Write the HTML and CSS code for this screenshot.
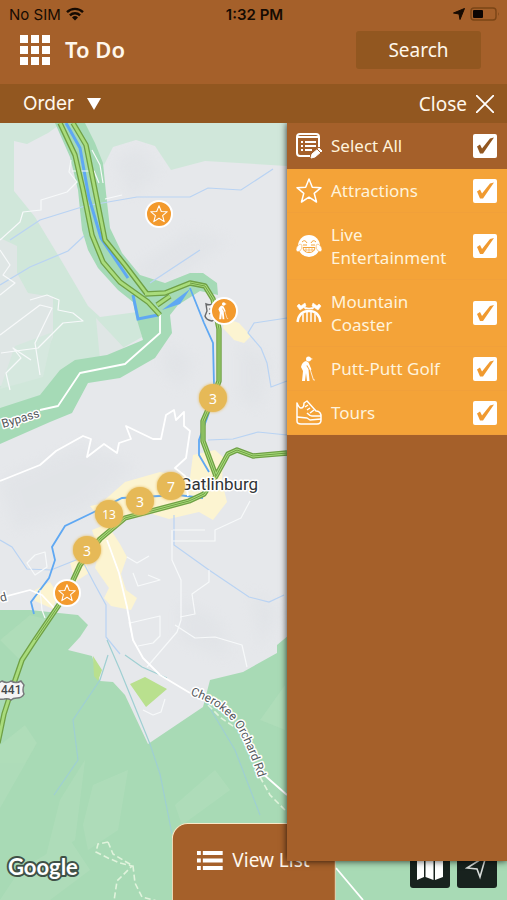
FILE: index.html
```html
<!DOCTYPE html>
<html lang="en">
<head>
    <meta charset="UTF-8">
    <meta name="viewport" content="width=device-width, initial-scale=1.0">
    <title>To Do</title>
    <link rel="stylesheet" href="styles.css">
</head>
<body>
    <div class="status-bar">
        <div class="carrier">
            <span>No SIM</span>
            <svg width="18" height="14" viewBox="0 0 18 14" fill="none" stroke="#160b02" stroke-width="2.4">
                <path d="M1 5.2a11.4 11.4 0 0 1 16 0M3.9 8.3a7.3 7.3 0 0 1 10.2 0"/>
                <path d="M9 13.6l-3-3.1a4.3 4.3 0 0 1 6 0z" fill="#160b02" stroke="none"/>
            </svg>
        </div>
        <strong class="clock">1:32 PM</strong>
        <div class="indicators">
            <svg width="12" height="12" viewBox="0 0 12 12"><path d="M11.5.5L7 11.5 6 6 .5 5z" fill="#160b02" stroke="#160b02" stroke-linejoin="round"/></svg>
            <svg width="30" height="14" viewBox="0 0 30 14">
                <rect x="1" y="1" width="25" height="12" rx="3" fill="none" stroke="#7b4516" stroke-width="1.4"/>
                <rect x="3" y="3" width="10" height="8" rx="1" fill="#0b0502"/>
                <path d="M28 5v4q1.5-2 0-4z" fill="#7b4516"/>
            </svg>
        </div>
    </div>

    <header class="header">
        <button class="menu-button" aria-label="Menu">
            <svg width="30" height="30" viewBox="0 0 30 30" fill="#fff">
                <path d="M0 0h8v8H0zM11 0h8v8h-8zM22 0h8v8h-8zM0 11h8v8H0zM11 11h8v8h-8zM22 11h8v8h-8zM0 22h8v8H0zM11 22h8v8h-8zM22 22h8v8h-8z"/>
            </svg>
        </button>
        <h1>To Do</h1>
        <button class="search-button">Search</button>
    </header>

    <div class="toolbar">
        <div class="order">
            <select class="order-select" aria-label="Order">
                <option>Order</option>
            </select>
            <svg width="14" height="12" viewBox="0 0 14 12"><path d="M0 0h14L7 12z" fill="#fff"/></svg>
        </div>
        <button class="close-button">
            Close
            <svg width="18" height="18" viewBox="0 0 18 18"><path d="M0 0l18 18M18 0L0 18" stroke="#fff" stroke-width="1.8"/></svg>
        </button>
    </div>

    <main class="map">
        <svg class="map-canvas" viewBox="0 123 507 777" preserveAspectRatio="xMidYMid slice">
            <defs>
                <path id="orchard" d="M190 695Q226 706 240 733T262 790"/>
                <filter id="soft"><feGaussianBlur stdDeviation="7"/></filter>
            </defs>
            <rect y="123" width="507" height="777" fill="#e6e8eb"/>

            <!-- hill shading -->
            <g fill="#dcdfe3" opacity=".4" filter="url(#soft)">
                <path d="M115 160l25-12 20 25-30 25zM130 270l60-40 40 10-70 50zM165 340l30 20-15 30-18-20zM240 340l30 20-10 50-20-10zM0 480l80-35 55 20-50 45-70 20zM180 600l40 20 10 40-50-20zM250 590l30 20-20 40z"/>
            </g>

            <!-- woods -->
            <g fill="#d0e7da">
                <path d="M0 123h62L48 133 27 144l-13-3v50l21 26 26 43 27 46 12 11 37-5 5 25-35 20-47 15-20 25L0 410z"/>
                <path d="M78 123h209v43l-82-5-34 9-16-24-19-6-23 7-9 18-12-18z"/>
            </g>
            <path d="M0 238l17 8v27l11 20 25 4v40l-18 38-25 8-10 3zM96 318l30 32-25 20z" fill="#dfe6e5"/>
            <path d="M15 346l38-14-10 45-43 12z" fill="#d6e8df"/>
            <path d="M55 123l15 34 8 33 4 40 6 20 10 18 20 22 15 12 4 18 6 20-36 15-32 5-15 10-20 25L0 408v36l50-22 22-9 16-30 32-5 35-20 17-25-2-18 8-10 22-14 18 4-1-12-14-10-13 0-25 10-25-8-18-22-12-25-4-35-3-30-8-20-15-30z" fill="#a5dab6"/>
            <path d="M0 610h30l48 5 10 10-8 12-12 13 24 6 8 25 13 1 12 13 23 49 55-37 7-27 33-8 34-19v-8l30-25 200-20v300H0z" fill="#a8dab5"/>
            <g fill="#b5dfbe" opacity=".5">
                <path d="M0 745l25-20 12 18-37 65zM60 800l25-40-10 80-30 20zM83 825l10-40 35-15-10 60-30 20zM175 805l40-35 15 20-48 35zM260 720l25-35v45zM0 640l30-25 20 5-30 40z"/>
                <path d="M20 870l50-30 20 30-40 30H0z"/>
            </g>
            <path d="M130 684l15-7 22 12-21 18zM93 656l9 14-4 11-4-5z" fill="#b9e08e"/>

            <!-- built-up areas -->
            <g fill="#fcf4d1">
                <path d="M225 318l14 5 12 13-7 7-10-3-11-12zM193 455l22-5 8 7-1 25 5 20-14 18-14-8-30 7-20-6-30 3-15 8-14-18 10-2 25-22 35-10 30 6z"/>
                <path d="M92 530l15-6 13 20 7 13-6 17 5 16 11 8-6 12-20-4-7-8 5-10-14-20 4-16zM35 590l15-8 8 12-5 15-18-8zM70 562l15-3 4 14-14 9z"/>
            </g>

            <!-- creeks -->
            <g fill="none" stroke="#b9d3f3" stroke-width="1.2">
                <path d="M0 285l30-18 38-16 16-15M10 240l30-20 45-14 52-9h53l18-9 33 2 32-21M150 283l50-33M287 318l-33 5-6 10 13 15 6 15 4 24 16-6M208 440l25-1 25-7 29 3M174 515v30l35 25 40 27 20 5 15-7M0 540l12 7 15 22 24 1 30-12 13 25 12 22v32l14 17"/>
            </g>
            <g fill="none" stroke="#9fcfd2" stroke-width="1.2">
                <path d="M108 655l-8 25-27 40 5 40-24 35M107 640l13 30 30 74 10 30 12 60M125 655l17 12 25 11M205 700l30 50 25 65"/>
            </g>
            <g fill="none" stroke="#5fa8f3" stroke-width="1.8">
                <path d="M190 288l14 35 9 20 1 42-4 25-11 30v15l10 17M203 498l-25-3-56 3-30 15-27 13-13 21 3 13-6 18-18 24 3 12"/>
                <path d="M133 295l5 24 20-4M66 123l14 25 9 50 12 40 27 40" stroke-width="3"/>
            </g>
            <path d="M162 310l28-21-10 15z" fill="#5fa8f3"/>

            <!-- side streets -->
            <g fill="none" stroke="#f7f9fa" stroke-width="1.2" stroke-linejoin="round">
                <path d="M0 240l20-18 3-10 18-2v-10l26-8 10-10-8-10 2-12M92 150l8 15 3 18M72 171h22l5 12M105 199l17-4"/>
                <path d="M0 250l10 15-7 10 12 8-15 12M30 300l17-5 12 5-1 10 15 3 10 8-20 2-25 25-37 5M0 335l40-30 12 3-17 35 5 32M10 390l-4-17 15-15-8-10 18 12"/>
                <path d="M172 530v30l9 20v40l-4 12-30 35M173 530h32M173 541h42v-11l26-12 9-17M180 617l15-3-3-20 17-12v-12M175 625l20 13 20-1 27 8 5 22M127 557l10 6 12-7M133 573l5 13 22-6-12-5M130 623l30-7v20l-7 7-15 3M133 640l-4-18M27 563l8-8 10-3 2 15-12 8zM40 590l2 20 3 8M143 710l10 5 8-3 4-13"/>
            </g>
            <g fill="none" stroke="#fff" stroke-width="1.8" stroke-linejoin="round">
                <path d="M0 481l5-2 35-14 16-14 27-15 8 3-4 18 17-13 13 9 2-10 12-4-5-13 27 13h8l5-24 8-5 2 10 8-8v14l6 5-4 27-11 10 10 8 3 20"/>
                <path d="M160 314v19l-35 31-45 9-22 33-18 4M0 598l30-8 12 5 13 14M107 540l12 33 8 34 6 33 10 18 17 17 30 18M262 773l25 22M336 868l27 32"/>
            </g>

            <!-- highways -->
            <g fill="none" stroke-linejoin="round">
                <g stroke="#6fa045" stroke-width="5.4">
                    <path d="M60 123l15 32 8 35 9 45 11 27 17 20 28 20 12 13M73 123l13 22 9 45 10 50 20 25 22 29M157 305l13-9"/>
                    <path d="M145 294l20-1 25-10 15 3 8 13 6 30v52l-6 17-10 23v20l13 35M287 453l-34 3-16-6-9 4-12 22-12 18-15 7-64 17-25 21-20 26-13 28-32 47-13 20-10 29-8 25-6 29"/>
                </g>
                <g stroke="#a9dc7c" stroke-width="2.8">
                    <path d="M60 123l15 32 8 35 9 45 11 27 17 20 28 20 12 13M73 123l13 22 9 45 10 50 20 25 22 29M157 305l13-9"/>
                    <path d="M145 294l20-1 25-10 15 3 8 13 6 30v52l-6 17-10 23v20l13 35M287 453l-34 3-16-6-9 4-12 22-12 18-15 7-64 17-25 21-20 26-13 28-32 47-13 20-10 29-8 25-6 29"/>
                </g>
                <path d="M190 283l15 3 8 13 6 30v52l-6 17-10 23v20l13 35M287 453l-34 3-16-6-9 4-12 22-12 18-15 7-64 17-25 21-20 26-13 28-32 47" stroke="#6fa045" stroke-width="1"/>
            </g>

            <!-- trails -->
            <path d="M208 705l13 13 15 10M260 777l10 18 15 15M108 842l-10 2-2 8 12 6 12 5 12 3-15 15-3 20M108 842l5 12 20 12 2 17 7 14 15 4" fill="none" stroke="#e0f3dc" stroke-width="1.6" stroke-dasharray="6 3"/>

            <g class="map-label">
                <text x="3" y="428" transform="rotate(-17 3 428)" font-size="12">Bypass</text>
                <text x="1" y="602" transform="rotate(-15 1 602)" font-size="12">d</text>
                <text font-size="12"><textPath href="#orchard">Cherokee Orchard Rd</textPath></text>
                <text class="town" x="180" y="490">Gatlinburg</text>
            </g>
            <path d="M-8 682q6 2 10-1 5 3 9 0 5 3 10 0l3 4q-2 5 0 9-2 4-7 4-4 0-6 2-3-2-7-1-6 1-12-1z" fill="#f4f4f4" stroke="#77797b" stroke-width="1.5"/>
            <text class="shield" x="1" y="694">441</text>
            <path d="M206 304q4 2 8-1l5 2v15q-5-1-7 1-6-1-7-5l2-5z" fill="#eee" stroke="#66686a" stroke-width="1.4"/>
            <path d="M209 309h4M209 314q3-2 4 0v3" fill="none" stroke="#66686a" stroke-width="1.2"/>
            <text class="google" x="8" y="875">Google</text>
        </svg>

        <button class="pin pin-attraction-north" aria-label="Attraction">
            <svg width="18" height="18" viewBox="0 0 26 26"><use href="#icon-star"/></svg>
        </button>
        <button class="pin pin-golf" aria-label="Putt-Putt Golf">
            <svg width="18" height="18" viewBox="0 0 26 26"><use href="#icon-golf"/></svg>
        </button>
        <button class="pin pin-attraction-south" aria-label="Attraction">
            <svg width="18" height="18" viewBox="0 0 26 26"><use href="#icon-star"/></svg>
        </button>
        <button class="cluster cluster-north">3</button>
        <button class="cluster cluster-town">7</button>
        <button class="cluster cluster-center">3</button>
        <button class="cluster cluster-west small">13</button>
        <button class="cluster cluster-south">3</button>

        <button class="view-list">
            <svg width="26" height="19" viewBox="0 0 26 19" fill="#fff">
                <path d="M0 0h4v4H0zM6 0h20v4H6zM0 7.5h4v4H0zM6 7.5h20v4H6zM0 15h4v4H0zM6 15h20v4H6z"/>
            </svg>
            View List
        </button>
        <div class="map-buttons">
            <button class="map-button" aria-label="Map type">
                <svg width="26" height="26" viewBox="0 0 26 26" fill="#fff"><path d="M0 3l7-2v21l-7 3zM8.5 1l8 2v22l-8-3zM18 3l8-2v21l-8 3z"/></svg>
            </button>
            <button class="map-button" aria-label="My location">
                <svg width="24" height="26" viewBox="0 0 24 26" fill="none" stroke="#d8dcda" stroke-width="1.6"><path d="M21 1L15 22l-3-8-10-1z"/></svg>
            </button>
        </div>

        <aside class="filters">
            <label class="filter filter-all">
                <svg class="filter-icon" viewBox="0 0 26 26" fill="none" stroke="#fff" stroke-width="2">
                    <path d="M14 23H4q-3 0-3-3V4q0-3 3-3h16q3 0 3 3v10M1 4h22"/>
                    <path d="M5 9h2M9 9h11M5 13h2M9 13h11M5 17h2M9 17h7"/>
                    <path d="M15 25l1-4 7-6 3 3-7 6z" fill="#fff" stroke="#fff" stroke-width="1"/>
                    <path d="M21 16l4 4" stroke="#a5602a" stroke-width="1"/>
                </svg>
                <span>Select All</span>
                <input type="checkbox" checked>
            </label>
            <label class="filter">
                <svg class="filter-icon" viewBox="0 0 26 26">
                    <path id="icon-star" d="M13 1l3.3 8.3 8.7.4-6.8 5.6 2.3 8.7-7.5-4.8L5.500 24l2.300-8.700L1 9.700l8.700-.4z" fill="none" stroke="#fff" stroke-width="1.5" stroke-linejoin="round"/>
                </svg>
                <span>Attractions</span>
                <input type="checkbox" checked>
            </label>
            <label class="filter">
                <svg class="filter-icon" viewBox="0 0 26 26">
                    <circle cx="13" cy="13" r="11" fill="#fff"/>
                    <path d="M4 11q-4 2-4 6 1 3 4 1 2-2 2-6zM22 11q4 2 4 6-1 3-4 1-2-2-2-6z" fill="#fff" stroke="#f4a338" stroke-width=".5"/>
                    <path d="M6 9q3-3 5 1M15 10q2-4 5-1M7 12h4M15 12h4" fill="none" stroke="#f4a338"/>
                    <path d="M7 14.500h12q-.5 5-6 5t-6-5z" fill="#fff" stroke="#f4a338"/>
                    <path d="M7.5 17h11M10 15v3M13 15v4M16 15v3" stroke="#f4a338" stroke-width=".6"/>
                </svg>
                <span>Live Entertainment</span>
                <input type="checkbox" checked>
            </label>
            <label class="filter">
                <svg class="filter-icon" viewBox="0 0 26 26" fill="none" stroke="#fff">
                    <path d="M1.500 22Q3 11 13 11t11.500 11" stroke-width="2.400"/>
                    <path d="M7 14v8M11 12v10M15 12v10M19 14v8" stroke-width="1.500"/>
                    <path d="M1 6l2-2 2 2 4-3 1 3-6 4zM16 6l1-3 4 3 2-2 2 2-3 4zM8 7l4 1h2l4-1-1 2H9z" fill="#fff" stroke-width=".6"/>
                </svg>
                <span>Mountain Coaster</span>
                <input type="checkbox" checked>
            </label>
            <label class="filter">
                <svg class="filter-icon" viewBox="0 0 26 26">
                    <g id="icon-golf">
                        <circle cx="12.500" cy="3" r="2.500" fill="#fff"/>
                        <path d="M12 1l5 2-3 1zM10 5q-4 1-5 6l2 4-1 10h3l1-8 1 8h2.500l-1-12-2-3 .5-1 3 5 1.500-.5-3-7z" fill="#fff"/>
                        <path d="M14 13l3.500 11h1.500" fill="none" stroke="#fff" stroke-width=".8"/>
                    </g>
                </svg>
                <span>Putt-Putt Golf</span>
                <input type="checkbox" checked>
            </label>
            <label class="filter">
                <svg class="filter-icon" viewBox="0 0 26 26" fill="none" stroke="#fff" stroke-width="1.5" stroke-linejoin="round">
                    <path d="M1 3v18q0 3 4 3h16q4 0 4-4v-5q-1-4-5-4L11 1 8 3q0 5-3 5-2 0-4-5z"/>
                    <path d="M1 17l10 1 3 2 11-1M11 13q3 3 5 3h9M9 7l3-2M11 10l3-2M14 13l4-3"/>
                </svg>
                <span>Tours</span>
                <input type="checkbox" checked>
            </label>
        </aside>
    </main>
</body>
</html>
```

FILE: styles.css
```css
* {
    box-sizing: border-box;
}
body {
    margin: 0;
    height: 100vh;
    display: flex;
    flex-direction: column;
    overflow: hidden;
    font-family: "Noto Sans", sans-serif;
    background: #a5602a;
    color: #fff7ec;
}
button {
    border: none;
    padding: 0;
    background: none;
    color: inherit;
    font: inherit;
    cursor: pointer;
}

/* phone status bar */
.status-bar {
    display: grid;
    grid-template-columns: 1fr auto 1fr;
    align-items: center;
    height: 28px;
    padding: 0 7px 0 9px;
    font-family: Inter, sans-serif;
    font-size: 15px;
    color: #160b02;
}
.carrier,
.indicators {
    display: flex;
    align-items: center;
    gap: 5px;
}
.indicators {
    justify-content: flex-end;
}
.clock {
    font-weight: 600;
}

.header {
    display: flex;
    align-items: center;
    padding: 3px 26px 15px 20px;
}
.menu-button {
    display: flex;
}
.header h1 {
    flex: 1;
    margin: 0 0 2px 15px;
    font-size: 22px;
    line-height: 30px;
    font-weight: 600;
}
.search-button {
    width: 125px;
    height: 38px;
    border-radius: 3px;
    background: #925720;
    font-size: 19px;
}

.toolbar {
    display: flex;
    align-items: center;
    justify-content: space-between;
    height: 39px;
    padding: 0 13px 0 23px;
    background: #925720;
}
.order {
    display: flex;
    align-items: center;
    gap: 12px;
}
.order-select {
    appearance: none;
    border: none;
    padding: 0;
    background: none;
    color: inherit;
    font-family: Inter, sans-serif;
    font-size: 19px;
}
.close-button {
    display: flex;
    align-items: center;
    gap: 9px;
    font-size: 19px;
}

.map {
    position: relative;
    flex: 1;
    min-height: 0;
    overflow: hidden;
}
.map-canvas {
    display: block;
    width: 100%;
    height: 100%;
}
.map-label {
    font-family: Roboto, sans-serif;
    fill: #55595d;
    stroke: #fff;
    stroke-width: 3px;
    stroke-linejoin: round;
    paint-order: stroke;
}
.town {
    font-size: 17px;
    fill: #303336;
}
.shield {
    font: 500 12px Roboto, sans-serif;
    fill: #45484b;
}
.google {
    font: 700 22px Lato, sans-serif;
    fill: #fff;
    stroke: #3f5147;
    stroke-width: 4px;
    stroke-linejoin: round;
    paint-order: stroke;
}

/* markers */
.pin,
.cluster {
    position: absolute;
    display: flex;
    align-items: center;
    justify-content: center;
    width: 28px;
    height: 28px;
    border-radius: 50%;
    transform: translate(-50%, -50%);
}
.pin {
    border: 2px solid #fff;
    background: #f39a2d;
}
.cluster {
    background: #e6b957;
    box-shadow: 0 0 3px #e6b957;
    color: #fff;
    font-size: 14px;
}
.small {
    font-size: 12px;
}
.pin-attraction-north { left: 159px; top: 91px; }
.pin-golf { left: 224px; top: 188px; }
.pin-attraction-south { left: 67px; top: 470px; }
.cluster-north { left: 213px; top: 275px; }
.cluster-town { left: 171px; top: 363px; }
.cluster-center { left: 140px; top: 378px; }
.cluster-west { left: 109px; top: 391px; }
.cluster-south { left: 87px; top: 427px; }

.view-list {
    position: absolute;
    left: 50%;
    bottom: 0;
    transform: translateX(-50%);
    display: flex;
    align-items: center;
    gap: 10px;
    height: 77px;
    padding: 0 25px 4px 24px;
    border: 1px solid #fbe9c8;
    border-bottom: none;
    border-radius: 16px 16px 0 0;
    background: #a5602a;
    font-size: 19px;
    white-space: nowrap;
}
.map-buttons {
    position: absolute;
    right: 10px;
    bottom: 12px;
    display: flex;
    gap: 7px;
}
.map-button {
    display: flex;
    align-items: center;
    justify-content: center;
    width: 40px;
    height: 40px;
    border-radius: 3px;
    background: #18221e;
}

/* category panel */
.filters {
    position: absolute;
    top: 0;
    right: 0;
    bottom: 39px;
    width: 220px;
    background: #a5602a;
    box-shadow: 0 0 7px rgba(0, 0, 0, 0.8);
}
.filter {
    display: flex;
    align-items: center;
    gap: 9px;
    padding: 10px 10px 10px 9px;
    border-bottom: 1px solid #f1a03a;
    background: #f4a338;
    color: #fff3dc;
    font-size: 17px;
    line-height: 23px;
}
.filter-all {
    padding: 11px 10px 11px 9px;
    border-bottom-color: #a5602a;
    background: #a5602a;
}
.filter-icon {
    flex: none;
    width: 26px;
    height: 26px;
    margin: -2px 0;
}
.filter span {
    flex: 1;
}
.filter input {
    appearance: none;
    flex: none;
    width: 24px;
    height: 24px;
    margin: -1px 0;
    border-radius: 2px;
    background: #fff;
    color: #f09a30;
}
.filter-all input {
    color: #925720;
}
.filter input:checked::before {
    content: "";
    display: block;
    height: 24px;
    background: currentColor;
    clip-path: polygon(4px 13px, 7px 11px, 9px 15px, 17px 5px, 21px 4px, 10px 20px, 7px 20px);
}
```
